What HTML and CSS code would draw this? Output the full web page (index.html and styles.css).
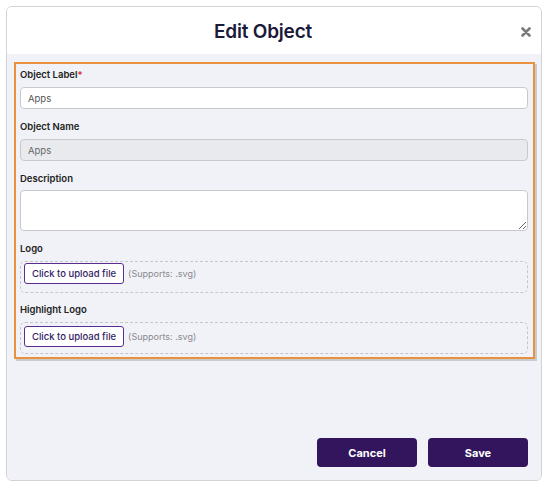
FILE: index.html
```html
<!DOCTYPE html>
<html>
<head>
<meta charset="utf-8">
<link rel="stylesheet" href="styles.css">
</head>
<body>
<div class="modal">
  <div class="modal-header">
    <h2 class="modal-title">Edit Object</h2>
    <button class="close-btn" aria-label="Close">
      <svg width="10" height="10" viewBox="0 0 10 10"><path d="M1.5 1.5 L8.5 8.5 M8.5 1.5 L1.5 8.5" stroke="#7a7a7a" stroke-width="2.6" stroke-linecap="round"/></svg>
    </button>
  </div>
  <div class="modal-body">
    <div class="form-box">
      <div class="field">
        <label class="label">Object Label<span class="req">*</span></label>
        <input class="input" type="text" value="Apps">
      </div>
      <div class="field">
        <label class="label">Object Name</label>
        <input class="input disabled" type="text" value="Apps" disabled>
      </div>
      <div class="field">
        <label class="label">Description</label>
        <textarea class="textarea"></textarea>
      </div>
      <div class="field field-logo">
        <label class="label">Logo</label>
        <div class="dropzone">
          <button class="upload-btn">Click to upload file</button>
          <span class="hint">(Supports: .svg)</span>
        </div>
      </div>
      <div class="field field-last">
        <label class="label">Highlight Logo</label>
        <div class="dropzone dropzone-2">
          <button class="upload-btn">Click to upload file</button>
          <span class="hint">(Supports: .svg)</span>
        </div>
      </div>
    </div>
    <div class="footer">
      <button class="btn">Cancel</button>
      <button class="btn">Save</button>
    </div>
  </div>
</div>
</body>
</html>
```

FILE: styles.css
```css
* { box-sizing: border-box; }
html, body { margin: 0; padding: 0; background: #ffffff; }
body {
  font-family: Inter, "Noto Sans", "Liberation Sans", sans-serif;
  padding: 6px;
}
.modal {
  width: 536px;
  height: 475px;
  border: 1px solid #d3d3d6;
  border-radius: 6px;
  background: #ffffff;
  display: flex;
  flex-direction: column;
  overflow: hidden;
}
.modal-header {
  height: 47px;
  flex: none;
  display: flex;
  align-items: center;
  justify-content: center;
  position: relative;
  background: #ffffff;
  padding-right: 22px;
}
.modal-title {
  margin: 0;
  font-size: 19px;
  font-weight: 600;
  color: #1b1a3a;
  letter-spacing: -0.2px;
  padding-top: 1px;
}
.close-btn {
  position: absolute;
  right: 9px;
  top: 19px;
  width: 12px;
  height: 12px;
  padding: 0;
  border: none;
  background: transparent;
  display: flex;
  align-items: center;
  justify-content: center;
}
.modal-body {
  flex: 1;
  background: #f1f2f7;
  padding: 8px 6px 13px 7px;
  display: flex;
  flex-direction: column;
}
.form-box {
  border: 2px solid #e8913f;
  box-shadow: 2px 2px 0 #c9cbd2;
  padding: 5px 5px 3px 4px;
}
.field { margin-bottom: 12px; }
.field-logo { margin-bottom: 11px; }
.field-last { margin-bottom: 0; }
.label {
  display: block;
  font-size: 9.5px;
  line-height: 12px;
  font-weight: 600;
  color: #222;
  margin-bottom: 6px;
}
.req { color: #e02020; }
.input {
  display: block;
  width: 100%;
  height: 22px;
  border: 1px solid #c8c9cc;
  border-radius: 4px;
  background: #fff;
  padding: 0 7px;
  font-family: inherit;
  font-size: 9.5px;
  color: #555;
}
.input.disabled {
  background: #e8eaee;
  color: #666;
}
.textarea {
  display: block;
  width: 100%;
  height: 41px;
  border: 1px solid #c8c9cc;
  border-radius: 4px;
  background: #fff;
  resize: vertical;
  font-family: inherit;
  margin: 0;
  margin-top: -1px;
}
.dropzone {
  display: flex;
  align-items: flex-start;
  border: 1px dashed #c6c7cc;
  border-radius: 5px;
  padding: 1px 3px 7px 3px;
  height: 32px;
  margin-top: 2px;
}
.dropzone-2 {
  padding-top: 3px;
  height: 32px;
  margin-top: 0;
}
.upload-btn {
  height: 21px;
  padding: 0 7px;
  border: 1px solid #5b2c91;
  border-radius: 3px;
  background: #fff;
  color: #341d63;
  font-family: inherit;
  font-size: 9.5px;
  font-weight: 500;
  cursor: pointer;
}
.hint {
  margin-left: 4px;
  font-size: 9px;
  line-height: 21px;
  color: #8a8a90;
}
.footer {
  margin-top: auto;
  display: flex;
  justify-content: flex-end;
  gap: 11px;
  padding-right: 7px;
}
.btn {
  width: 100px;
  height: 29px;
  border: none;
  border-radius: 4px;
  background: #33155e;
  color: #fff;
  font-family: inherit;
  font-size: 11px;
  font-weight: 700;
  cursor: pointer;
}
```
